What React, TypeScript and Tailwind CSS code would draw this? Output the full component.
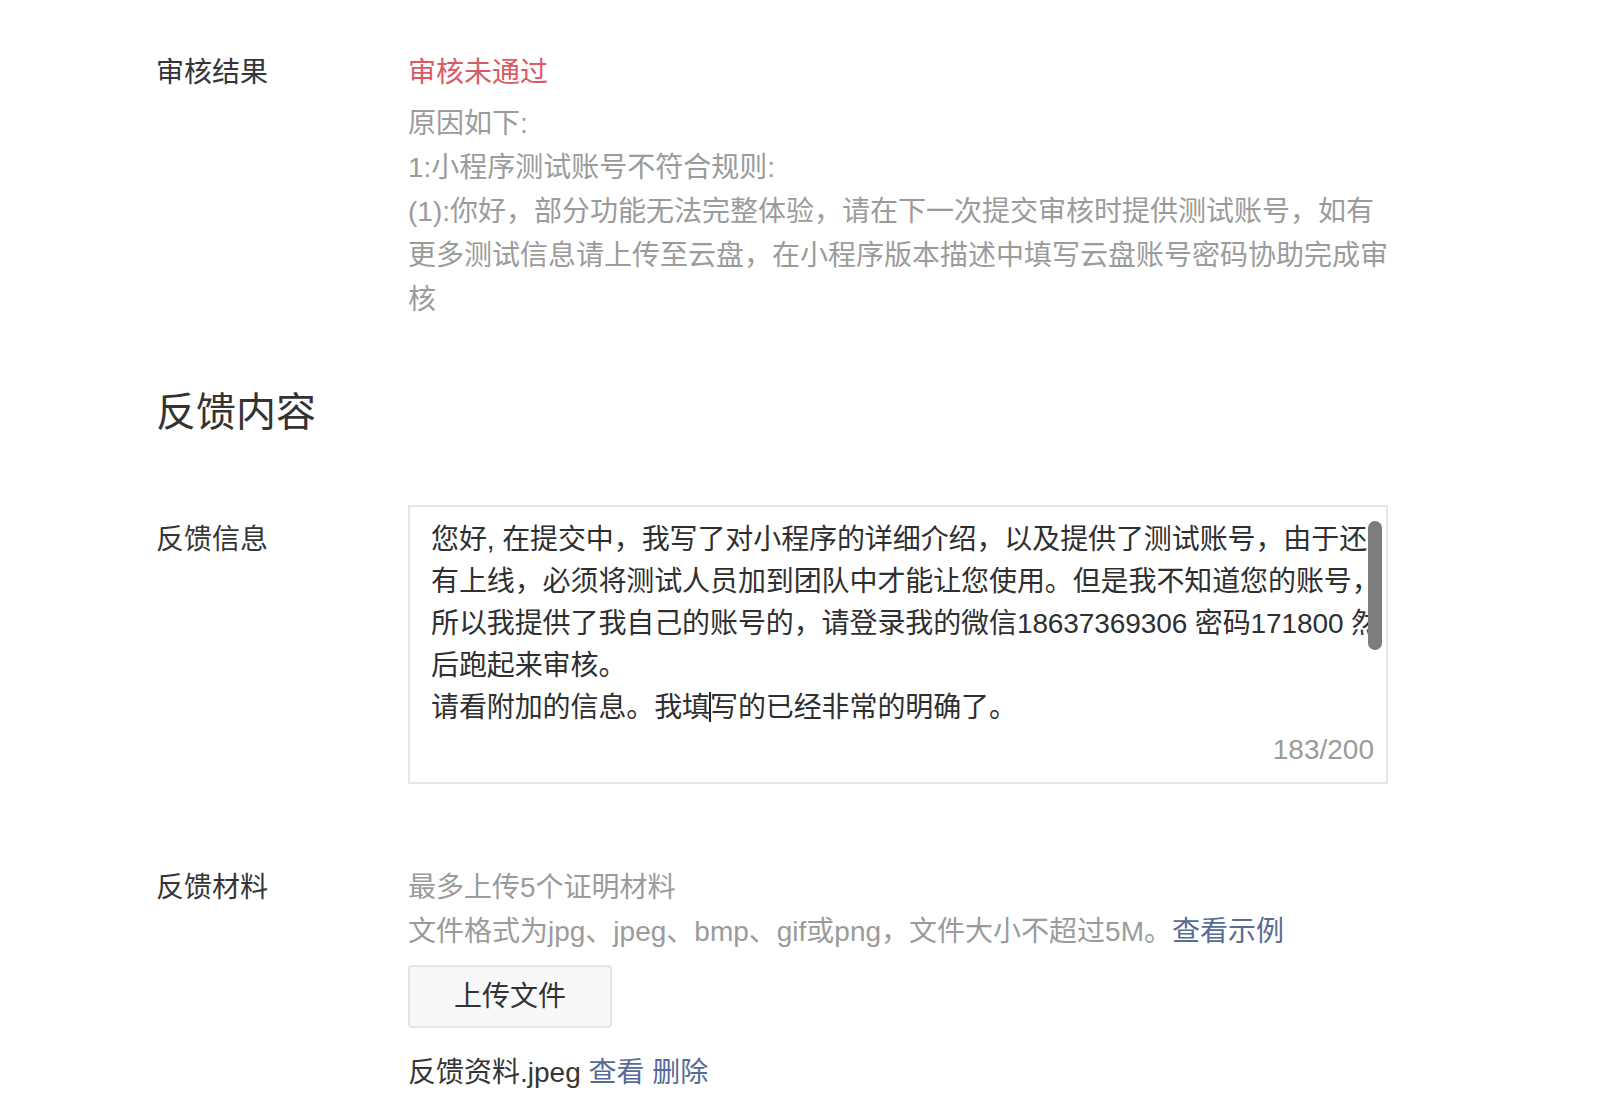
export default function App() {
    const reasonLines = [
        "原因如下:",
        "1:小程序测试账号不符合规则:",
        "(1):你好，部分功能无法完整体验，请在下一次提交审核时提供测试账号，如有",
        "更多测试信息请上传至云盘，在小程序版本描述中填写云盘账号密码协助完成审",
        "核",
    ];

    const feedbackLines = [
        "您好, 在提交中，我写了对小程序的详细介绍，以及提供了测试账号，由于还",
        "有上线，必须将测试人员加到团队中才能让您使用。但是我不知道您的账号，",
        "所以我提供了我自己的账号的，请登录我的微信18637369306 密码171800 然",
        "后跑起来审核。",
    ];

    return (
        <div className="min-h-screen bg-white pl-[156px] pt-[51px] font-['Liberation_Sans','Noto_Sans_CJK_SC',sans-serif] text-[28px] leading-[44px] text-[#353535]">
            {/* 审核结果 */}
            <div className="flex">
                <div className="w-[252px] shrink-0">审核结果</div>
                <div className="w-[980px]">
                    <div className="text-[#d95a62]">审核未通过</div>
                    <div className="mt-[7px] text-[#9b9b9b]">
                        {reasonLines.map((line) => (
                            <div key={line} className="whitespace-nowrap">{line}</div>
                        ))}
                    </div>
                </div>
            </div>

            <h2 className="mt-[62px] text-[40px] leading-[56px] font-normal text-[#333]">反馈内容</h2>

            {/* 反馈信息 */}
            <div className="mt-[65px] flex">
                <div className="w-[252px] shrink-0 pt-[14px] leading-[42px]">反馈信息</div>
                <div className="relative flex h-[279px] w-[980px] flex-col border-2 border-[#e6e6e6] pl-[21px] pr-[12px] pt-[12px]">
                    <div className="leading-[42px] tracking-[-0.1px] text-[#2f2f2f]">
                        {feedbackLines.map((line) => (
                            <div key={line} className="whitespace-nowrap">{line}</div>
                        ))}
                        <div className="whitespace-nowrap">
                            请看附加的信息。我填<span className="relative -mx-[1px] inline-block h-[30px] w-[2px] bg-[#222] align-[-5px]" />写的已经非常的明确了。
                        </div>
                    </div>
                    <div className="text-right text-[28px] leading-[42px] text-[#9b9b9b]">183/200</div>
                    <div className="absolute right-[4px] top-[14px] h-[129px] w-[14px] rounded-full bg-[#7d7d7d]" />
                </div>
            </div>

            {/* 反馈材料 */}
            <div className="mt-[82px] flex">
                <div className="w-[252px] shrink-0">反馈材料</div>
                <div className="w-[980px]">
                    <div className="text-[#9b9b9b]">最多上传5个证明材料</div>
                    <div className="whitespace-nowrap text-[#9b9b9b]">
                        文件格式为jpg、jpeg、bmp、gif或png，文件大小不超过5M。<span className="text-[#576b95]">查看示例</span>
                    </div>
                    <button className="mt-[11px] flex h-[63px] w-[204px] items-center justify-center rounded-[4px] border-2 border-[#e4e4e4] bg-[#f8f8f8] text-[28px] text-[#333]">
                        上传文件
                    </button>
                    <div className="mt-[23px] whitespace-nowrap">
                        反馈资料.jpeg <span className="text-[#576b95]">查看</span> <span className="text-[#576b95]">删除</span>
                    </div>
                </div>
            </div>
        </div>
    );
}
